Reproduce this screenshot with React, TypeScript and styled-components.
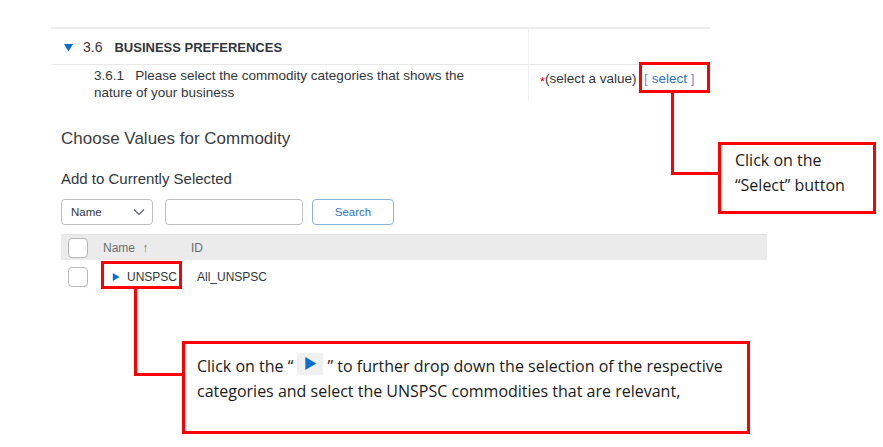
import React from 'react'
import styled, { createGlobalStyle } from 'styled-components'

const GlobalStyle = createGlobalStyle`
  html, body {
    margin: 0;
    padding: 0;
    background: #ffffff;
  }
  body {
    font-family: "Liberation Sans", Arial, sans-serif;
    color: #32363a;
  }
`

const Triangle = ({ dir, size = 9, color = '#0a6ed1' }: { dir: 'down' | 'right'; size?: number; color?: string }) => (
  <svg width={size} height={size} viewBox="0 0 10 10" style={{ display: 'block' }}>
    {dir === 'down' ? (
      <polygon points="0,1 10,1 5,9.5" fill={color} />
    ) : (
      <polygon points="1,0 9.5,5 1,10" fill={color} />
    )}
  </svg>
)

const Chevron = () => (
  <svg width="12" height="8" viewBox="0 0 12 8">
    <polyline points="1,1.5 6,6.5 11,1.5" fill="none" stroke="#5a5e62" strokeWidth="1.2" />
  </svg>
)

const App = () => {
  return (
    <>
      <GlobalStyle />
      <Page>
        <FormSection>
          <SectionRow>
            <Cell>
              <SectionTitle>
                <Triangle dir="down" />
                <SectionNum>3.6</SectionNum>
                <SectionName>BUSINESS PREFERENCES</SectionName>
              </SectionTitle>
            </Cell>
            <Cell $divider />
          </SectionRow>
          <QuestionRow>
            <Cell>
              <QuestionText>
                3.6.1&nbsp;&nbsp; Please select the commodity categories that shows the nature of your business
              </QuestionText>
            </Cell>
            <Cell $divider>
              <ValueText>
                <Required>*</Required>(select a value)&nbsp; <SelectLink><Bracket>[</Bracket> select <Bracket>]</Bracket></SelectLink>
              </ValueText>
            </Cell>
          </QuestionRow>
        </FormSection>

        <Dialog>
          <DialogTitle>Choose Values for Commodity</DialogTitle>
          <SubTitle>Add to Currently Selected</SubTitle>
          <Controls>
            <Dropdown>
              <span>Name</span>
              <Chevron />
            </Dropdown>
            <SearchInput />
            <SearchButton>Search</SearchButton>
          </Controls>
          <Table>
            <HeaderRow>
              <Checkbox />
              <HeadLabel>Name <Arrow>↑</Arrow></HeadLabel>
              <HeadLabel>ID</HeadLabel>
            </HeaderRow>
            <BodyRow>
              <Checkbox />
              <NameCell>
                <Triangle dir="right" size={8} />
                <span>UNSPSC</span>
              </NameCell>
              <IdCell>All_UNSPSC</IdCell>
            </BodyRow>
          </Table>
        </Dialog>

        <Highlight style={{ left: 639, top: 62, width: 71, height: 31 }} />
        <Connector style={{ left: 671, top: 92, width: 49, height: 83 }} />
        <Callout style={{ left: 718, top: 142, width: 158, height: 72 }} $pad="3px 8px 0 14px" $lh={25}>
          Click on the<br />“Select” button
        </Callout>

        <Highlight style={{ left: 101, top: 261, width: 81, height: 28 }} />
        <Connector style={{ left: 134, top: 289, width: 50, height: 87 }} />
        <Callout style={{ left: 182, top: 341, width: 568, height: 93 }} $pad="10px 8px 0 12px" $lh={24}>
          Click on the “ <PlayChip><Triangle dir="right" size={13} /></PlayChip> ” to further drop down the selection of the respective
          categories and select the UNSPSC commodities that are relevant,
        </Callout>
      </Page>
    </>
  )
}

const Page = styled.div`
  position: relative;
  width: 883px;
  height: 447px;
  overflow: hidden;
  padding-top: 27px;
  box-sizing: border-box;
`

const FormSection = styled.div`
  margin-left: 51px;
  width: 659px;
  border-top: 2px solid #ededed;
`

const SectionRow = styled.div`
  display: grid;
  grid-template-columns: 477px 1fr;
  height: 35px;
  border-bottom: 1px solid #e8e8e8;
`

const QuestionRow = styled.div`
  display: grid;
  grid-template-columns: 477px 1fr;
  height: 36px;
`

const Cell = styled.div<{ $divider?: boolean }>`
  display: flex;
  align-items: flex-start;
  border-left: ${p => (p.$divider ? '1px solid #f0f0f0' : 'none')};
`

const SectionTitle = styled.div`
  display: flex;
  align-items: center;
  padding: 10px 0 0 13px;
`

const SectionNum = styled.span`
  margin-left: 10px;
  font-size: 14px;
  color: #32363a;
`

const SectionName = styled.span`
  margin-left: 12px;
  font-size: 13px;
  font-weight: 700;
  color: #32363a;
`

const QuestionText = styled.div`
  padding: 2px 0 0 43px;
  width: 390px;
  font-size: 13.5px;
  line-height: 17px;
  color: #32363a;
`

const ValueText = styled.div`
  padding: 5px 0 0 11px;
  font-size: 13.5px;
  line-height: 17px;
  color: #32363a;
  white-space: nowrap;
`

const Required = styled.span`
  color: #d0021b;
  font-size: 13px;
  position: relative;
  top: 3px;
`

const SelectLink = styled.span`
  color: #2e74c9;
`

const Bracket = styled.span`
  color: #6d92bf;
`

const Dialog = styled.div`
  padding-left: 61px;
`

const DialogTitle = styled.div`
  margin-top: 28px;
  font-size: 17px;
  line-height: 20px;
  color: #3a3d40;
`

const SubTitle = styled.div`
  margin-top: 21px;
  font-size: 15px;
  line-height: 18px;
  color: #32363a;
`

const Controls = styled.div`
  display: flex;
  align-items: center;
  margin-top: 11px;
  height: 26px;
`

const Dropdown = styled.div`
  display: flex;
  align-items: center;
  justify-content: space-between;
  box-sizing: border-box;
  width: 92px;
  height: 26px;
  padding: 0 7px 0 9px;
  border: 1px solid #bfbfbf;
  border-radius: 4px;
  font-size: 11.5px;
  color: #32363a;
`

const SearchInput = styled.div`
  box-sizing: border-box;
  width: 138px;
  height: 26px;
  margin-left: 12px;
  border: 1px solid #bfbfbf;
  border-radius: 4px;
`

const SearchButton = styled.div`
  display: flex;
  align-items: center;
  justify-content: center;
  box-sizing: border-box;
  width: 82px;
  height: 26px;
  margin-left: 9px;
  border: 1px solid #8ab4e2;
  border-radius: 4px;
  font-size: 11.5px;
  color: #2e74c9;
`

const Table = styled.div`
  margin-top: 9px;
  width: 706px;
`

const HeaderRow = styled.div`
  display: grid;
  grid-template-columns: 42px 88px 1fr;
  align-items: center;
  height: 26px;
  background: #ebebeb;
  border-top: 1px solid #e2e2e2;
  box-sizing: border-box;
`

const BodyRow = styled.div`
  display: grid;
  grid-template-columns: 42px 88px 1fr;
  align-items: center;
  height: 33px;
`

const Checkbox = styled.div`
  box-sizing: border-box;
  width: 20px;
  height: 20px;
  margin-left: 7px;
  border: 1px solid #b8b8b8;
  border-radius: 4px;
  background: #ffffff;
`

const HeadLabel = styled.div`
  font-size: 12px;
  color: #6a6d70;
`

const Arrow = styled.span`
  margin-left: 4px;
  font-weight: 700;
`

const NameCell = styled.div`
  display: flex;
  align-items: center;
  gap: 7px;
  padding-left: 9px;
  font-size: 12px;
  color: #32363a;
`

const IdCell = styled.div`
  padding-left: 6px;
  font-size: 12px;
  color: #32363a;
`

const Highlight = styled.div`
  position: absolute;
  box-sizing: border-box;
  border: 3px solid #ff0000;
`

const Connector = styled.div`
  position: absolute;
  box-sizing: border-box;
  border-left: 3px solid #ff0000;
  border-bottom: 3px solid #ff0000;
`

const Callout = styled.div<{ $pad: string; $lh: number }>`
  position: absolute;
  box-sizing: border-box;
  border: 3px solid #ff0000;
  background: #ffffff;
  padding: ${p => p.$pad};
  font-family: "Open Sans", "Noto Sans", sans-serif;
  font-size: 16px;
  line-height: ${p => p.$lh}px;
  color: #1a1a1a;
`

const PlayChip = styled.span`
  display: inline-flex;
  align-items: center;
  justify-content: center;
  width: 26px;
  height: 22px;
  background: #f0f0f0;
  vertical-align: middle;
  position: relative;
  top: -4px;
`

export default App
